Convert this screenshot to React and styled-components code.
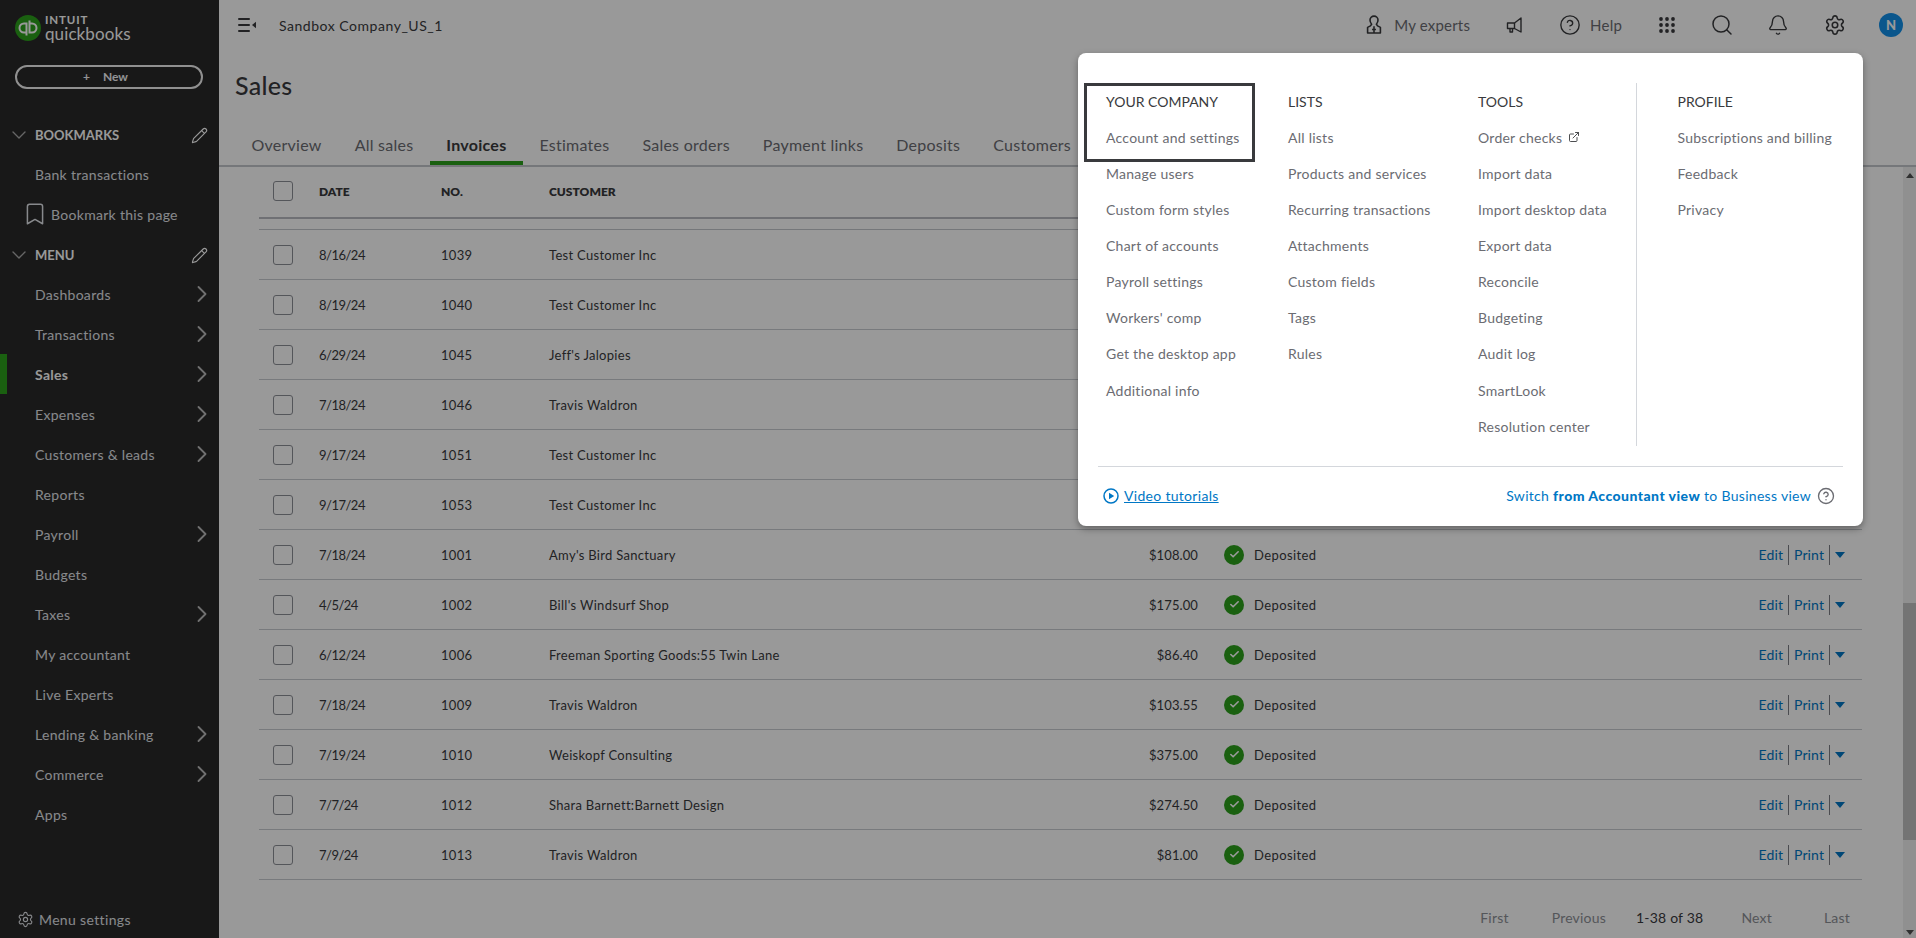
import React from 'react';
import styled, { createGlobalStyle } from 'styled-components';
import { ChevronDown, ChevronRight, Pencil, Bookmark, Settings, Search, Bell, CircleHelp, ExternalLink, Check } from 'lucide-react';

const FONT = `Lato, "Open Sans", "Liberation Sans", sans-serif`;

const Global = createGlobalStyle`
  html, body { margin: 0; padding: 0; height: 100%; overflow: hidden; background: #fff; }
  * { box-sizing: border-box; }
  body { font-family: ${FONT}; font-size: 14px; color: #393a3d; }
`;

const Page = styled.div`
  position: relative;
  display: flex;
  width: 1916px;
  height: 938px;
  overflow: hidden;
  background: #fff;
`;

const Sidebar = styled.aside`
  width: 219px;
  flex: none;
  display: flex;
  flex-direction: column;
  background: #282828;
  color: #e4e6ea;
`;
const LogoRow = styled.div`
  height: 65px;
  flex: none;
  display: flex;
  align-items: center;
  gap: 4px;
  padding: 0 0 9px 15px;
`;
const LogoText = styled.div`
  display: flex;
  flex-direction: column;
  color: #fff;
`;
const LogoIntuit = styled.span`
  font-size: 11.5px;
  font-weight: 700;
  letter-spacing: 0.9px;
  line-height: 11px;
`;
const LogoBooks = styled.span`
  font-size: 17px;
  font-weight: 400;
  letter-spacing: 0.1px;
  line-height: 17px;
`;
const NewButton = styled.div`
  margin-left: 15px;
  width: 188px;
  height: 24px;
  flex: none;
  border: 2px solid #f1f1f1;
  border-radius: 12px;
  display: flex;
  align-items: center;
  justify-content: center;
  gap: 13px;
  padding: 0 7px 1px 0;
  font-size: 12px;
  font-weight: 700;
  color: #f4f5f8;
  margin-bottom: 25px;
`;
const SideSection = styled.div`
  height: 40px;
  flex: none;
  display: flex;
  align-items: center;
  padding: 2px 11px 0 7px;
  font-size: 13px;
  font-weight: 700;
  color: #fff;
`;
const SectionLabel = styled.span`
  margin-left: 4px;
  flex: 1;
`;
const SideItem = styled.div`
  position: relative;
  height: 40px;
  flex: none;
  display: flex;
  align-items: center;
  padding: 0 3px 0 ${p => (p.$icon ? 22 : 35)}px;
  font-size: 14px;
  letter-spacing: 0.3px;
  font-weight: ${p => (p.$active ? 700 : 400)};
  color: ${p => (p.$active ? '#fff' : '#e2e4e9')};
  gap: 3px;
  ${p => p.$active && `border-left: 7px solid #2ca01c; padding-left: 28px;`}
`;
const ItemLabel = styled.span`
  flex: 1;
`;
const SideFooter = styled.div`
  margin-top: auto;
  height: 38px;
  flex: none;
  padding: 0 0 0 17px;
  display: flex;
  align-items: center;
  gap: 5px;
  font-size: 14px;
  letter-spacing: 0.35px;
  color: #e2e4e9;
`;

const Main = styled.main`
  flex: 1;
  min-width: 0;
  display: flex;
  flex-direction: column;
`;
const TopBar = styled.header`
  height: 50px;
  flex: none;
  display: flex;
  align-items: center;
  padding-left: 19px;
  font-size: 14px;
  color: #393a3d;
`;
const Company = styled.span`
  margin-left: 22px;
  letter-spacing: 0.53px;
  flex: 1;
`;
const TopTool = styled.span`
  display: flex;
  align-items: center;
  flex: none;
  gap: ${p => p.$gap || 0}px;
  margin-right: ${p => p.$mr || 0}px;
  color: #6b6c72;
  font-size: 15px;
  letter-spacing: 0.2px;
`;
const Avatar = styled.span`
  width: 24px;
  height: 24px;
  border-radius: 50%;
  background: #1290ea;
  color: #fff;
  font-size: 13px;
  font-weight: 900;
  display: flex;
  align-items: center;
  justify-content: center;
  margin-right: 13px;
`;
const Title = styled.h1`
  height: 70px;
  flex: none;
  margin: 0;
  padding-left: 16px;
  display: flex;
  align-items: center;
  font-size: 25px;
  font-weight: 500;
  letter-spacing: 0.3px;
  color: #393a3d;
`;
const Tabs = styled.nav`
  height: 47px;
  flex: none;
  display: flex;
  padding-left: 16px;
  border-bottom: 2px solid #c4c6cc;
`;
const Tab = styled.div`
  height: 45px;
  padding: 8px 16.5px 0;
  display: flex;
  align-items: center;
  font-size: 16px;
  letter-spacing: 0.25px;
  font-weight: ${p => (p.$active ? 700 : 400)};
  color: ${p => (p.$active ? '#393a3d' : '#6b6c72')};
  border-bottom: 4px solid ${p => (p.$active ? '#2ca01c' : 'transparent')};
`;
const Content = styled.div`
  flex: 1;
  min-height: 0;
  display: flex;
`;
const TableArea = styled.div`
  flex: 1;
  min-width: 0;
  padding: 0 41px 0 40px;
  display: flex;
  flex-direction: column;
`;
const Grid = styled.div`
  display: grid;
  grid-template-columns: 60px 122px 108px 400px 249px 1fr auto;
  align-items: center;
`;
const HeadRow = styled(Grid)`
  height: 52px;
  flex: none;
  padding-bottom: 2px;
  border-bottom: 2px solid #b9bbc2;
  font-size: 12px;
  font-weight: 800;
  color: #393a3d;
`;
const Spacer = styled.div`
  height: 11px;
  flex: none;
  border-bottom: 1px solid #c4c6cc;
`;
const Row = styled(Grid)`
  height: 50px;
  flex: none;
  border-bottom: 1.5px solid #c9cbd0;
  font-size: 13px;
  letter-spacing: 0.3px;
  color: #393a3d;
`;
const DateCell = styled.span`
  letter-spacing: -0.5px;
`;
const Box = styled.span`
  display: block;
  width: 20px;
  height: 20px;
  margin-left: 14px;
  border: 1.5px solid #8d9096;
  border-radius: 3px;
`;
const Amount = styled.span`
  text-align: right;
  letter-spacing: 0.1px;
`;
const Status = styled.span`
  display: flex;
  align-items: center;
  gap: 10px;
  padding-left: 26px;
  letter-spacing: 0.4px;
`;
const StatusDot = styled.span`
  width: 20px;
  height: 20px;
  border-radius: 50%;
  background: #2ca01c;
  display: flex;
  align-items: center;
  justify-content: center;
  color: #fff;
`;
const Actions = styled.span`
  display: flex;
  align-items: center;
  padding-right: 17px;
  color: #0077c5;
  font-size: 14px;
  letter-spacing: 0.1px;
`;
const Sep = styled.span`
  width: 1px;
  height: 20px;
  margin: 0 5px;
  background: #7d7f85;
`;
const Caret = styled.span`
  width: 0;
  height: 0;
  border-left: 5px solid transparent;
  border-right: 5px solid transparent;
  border-top: 6px solid #0077c5;
`;
const Pager = styled.div`
  flex: 1;
  display: flex;
  align-items: center;
  justify-content: flex-end;
  padding: 16px 12px 0 0;
  font-size: 14px;
  letter-spacing: 0.2px;
`;
const PagerItem = styled.span`
  margin-left: ${p => p.$ml}px;
  color: ${p => (p.$on ? '#393a3d' : '#8d9096')};
`;
const Scrollbar = styled.div`
  width: 13px;
  flex: none;
  background: #f1f1f1;
  display: flex;
  flex-direction: column;
  align-items: center;
`;
const ScrollUp = styled.span`
  margin-top: 6px;
  border-left: 4px solid transparent;
  border-right: 4px solid transparent;
  border-bottom: 5px solid #505050;
`;
const Thumb = styled.span`
  width: 100%;
  height: 237px;
  margin-top: 425px;
  background: #c1c1c1;
`;
const ScrollDown = styled.span`
  margin-top: auto;
  margin-bottom: 3px;
  border-left: 4px solid transparent;
  border-right: 4px solid transparent;
  border-top: 5px solid #505050;
`;

const Overlay = styled.div`
  position: absolute;
  inset: 0;
  background: rgba(0, 0, 0, 0.4);
`;
const Popup = styled.div`
  position: absolute;
  left: 1078px;
  top: 53px;
  width: 785px;
  height: 473px;
  background: #fff;
  border-radius: 8px;
  box-shadow: 0 3px 7px rgba(0, 0, 0, 0.35);
  display: flex;
  flex-direction: column;
`;
const FocusBox = styled.div`
  position: absolute;
  left: 6px;
  top: 30px;
  width: 171px;
  height: 79px;
  border: 3px solid #393a3d;
`;
const Columns = styled.div`
  display: grid;
  grid-template-columns: 182px 190px 158.5px 1fr;
  margin: 30px 0 0 28px;
  height: 363px;
  flex: none;
`;
const Column = styled.ul`
  list-style: none;
  margin: 0;
  padding: 0 0 0 ${p => p.$pl || 0}px;
  ${p => p.$rule && `border-right: 1px solid #d4d7dc;`}
  & > li:nth-child(9) { margin-top: 1px; }
`;
const ColHead = styled.li`
  height: 36px;
  padding-top: 1px;
  display: flex;
  align-items: center;
  font-size: 14px;
  color: #393a3d;
`;
const ColItem = styled.li`
  height: 36px;
  display: flex;
  align-items: center;
  gap: 6px;
  font-size: 14px;
  letter-spacing: 0.25px;
  color: #6b6c72;
`;
const Rule = styled.div`
  height: 1px;
  margin: 20px 20px 0;
  background: #d4d7dc;
  flex: none;
`;
const Footer = styled.div`
  flex: 1;
  display: flex;
  align-items: center;
  justify-content: space-between;
  padding: 0 28px 2px 25px;
  font-size: 14px;
  letter-spacing: 0.3px;
  color: #0077c5;
`;
const FootLink = styled.span`
  display: flex;
  align-items: center;
  gap: 5px;
`;
const Underlined = styled.span`
  text-decoration: underline;
`;
const FootNote = styled.span`
  display: flex;
  align-items: center;
  gap: 6px;
`;
const Strong = styled.b`
  font-weight: 900;
  letter-spacing: 0.45px;
`;

const QbLogo = () => (
  <svg width="26" height="26" viewBox="0 0 26 26">
    <circle cx="13" cy="13" r="13" fill="#2ca01c" />
    <g fill="none" stroke="#fff" strokeWidth="2">
      <path d="M11.5 17.5H9a4.5 4.5 0 0 1 0-9h2.5v12" />
      <path d="M14.5 8.5H17a4.5 4.5 0 0 1 0 9h-2.5v-12" />
    </g>
  </svg>
);
const Collapse = () => (
  <svg width="19" height="14" viewBox="0 0 19 14" fill="#393a3d">
    <rect x="0" y="0" width="12" height="2" rx="1" />
    <rect x="0" y="6" width="12" height="2" rx="1" />
    <rect x="0" y="12" width="12" height="2" rx="1" />
    <path d="M18 3.8v6.4L14 7z" />
  </svg>
);
const Expert = () => (
  <svg width="16" height="22" viewBox="0 0 18 24" fill="none" stroke="#393a3d" strokeWidth="1.8" strokeLinejoin="round">
    <path d="M9 2a4.5 4.5 0 0 1 4.5 4.5c0 2-.5 3.2-1.8 4.6L13 13l3.2 1.7V21H1.800v-6.300L5 13l1.300-1.900C5 9.700 4.500 8.500 4.500 6.500A4.500 4.500 0 0 1 9 2z" />
    <path d="M9 13.500v7.500M6.800 17h4.400" />
  </svg>
);
const Megaphone = () => (
  <svg width="18" height="18" viewBox="0 0 18 18" fill="none" stroke="#393a3d" strokeWidth="1.400" strokeLinejoin="round">
    <path d="M16 2v14l-6.500-3.500H2.500v-5.500H9.500z" />
    <path d="M9.500 7v5.500M5 12.500V16h2.500v-3.500" />
  </svg>
);
const Dots = () => (
  <svg width="16" height="16" viewBox="0 0 16 16" fill="#393a3d">
    {[2, 8, 14].flatMap(y => [2, 8, 14].map(x => <circle key={`${x}-${y}`} cx={x} cy={y} r="1.900" />))}
  </svg>
);
const PlayCircle = () => (
  <svg width="16" height="16" viewBox="0 0 16 16">
    <circle cx="8" cy="8" r="7" fill="none" stroke="#0077c5" strokeWidth="1.500" />
    <path d="M6 4.800v6.400L11.200 8z" fill="#0077c5" />
  </svg>
);

const NAV = [
  ['Dashboards', 1], ['Transactions', 1], ['Sales', 1, 1], ['Expenses', 1], ['Customers & leads', 1],
  ['Reports'], ['Payroll', 1], ['Budgets'], ['Taxes', 1], ['My accountant'], ['Live Experts'],
  ['Lending & banking', 1], ['Commerce', 1], ['Apps'],
];
const TABS = [
  ['Overview'], ['All sales'], ['Invoices', true], ['Estimates'], ['Sales orders'], ['Payment links'], ['Deposits'], ['Customers'],
];
const ROWS = [
  ['8/16/24', '1039', 'Test Customer Inc'],
  ['8/19/24', '1040', 'Test Customer Inc'],
  ['6/29/24', '1045', "Jeff's Jalopies"],
  ['7/18/24', '1046', 'Travis Waldron'],
  ['9/17/24', '1051', 'Test Customer Inc'],
  ['9/17/24', '1053', 'Test Customer Inc'],
  ['7/18/24', '1001', "Amy's Bird Sanctuary", '$108.00'],
  ['4/5/24', '1002', "Bill's Windsurf Shop", '$175.00'],
  ['6/12/24', '1006', 'Freeman Sporting Goods:55 Twin Lane', '$86.40'],
  ['7/18/24', '1009', 'Travis Waldron', '$103.55'],
  ['7/19/24', '1010', 'Weiskopf Consulting', '$375.00'],
  ['7/7/24', '1012', 'Shara Barnett:Barnett Design', '$274.50'],
  ['7/9/24', '1013', 'Travis Waldron', '$81.00'],
];
const COLS = [
  ['YOUR COMPANY', ['Account and settings', 'Manage users', 'Custom form styles', 'Chart of accounts', 'Payroll settings', "Workers' comp", 'Get the desktop app', 'Additional info']],
  ['LISTS', ['All lists', 'Products and services', 'Recurring transactions', 'Attachments', 'Custom fields', 'Tags', 'Rules']],
  ['TOOLS', ['Order checks', 'Import data', 'Import desktop data', 'Export data', 'Reconcile', 'Budgeting', 'Audit log', 'SmartLook', 'Resolution center']],
  ['PROFILE', ['Subscriptions and billing', 'Feedback', 'Privacy']],
];
const PAGER = [['First', 0], ['Previous', 43], ['1-38 of 38', 30, true], ['Next', 38], ['Last', 52]];

export default function App() {
  return (
    <Page>
      <Global />
      <Sidebar>
        <LogoRow>
          <QbLogo />
          <LogoText>
            <LogoIntuit>INTUIT</LogoIntuit>
            <LogoBooks>quickbooks</LogoBooks>
          </LogoText>
        </LogoRow>
        <NewButton><span>+</span><span>New</span></NewButton>
        <SideSection>
          <ChevronDown size={24} strokeWidth={1.4} color="#aaa" />
          <SectionLabel>BOOKMARKS</SectionLabel>
          <Pencil size={17} strokeWidth={1.6} />
        </SideSection>
        <SideItem>Bank transactions</SideItem>
        <SideItem $icon><Bookmark size={26} strokeWidth={1.4} color="#e2e4e9" /><ItemLabel>Bookmark this page</ItemLabel></SideItem>
        <SideSection>
          <ChevronDown size={24} strokeWidth={1.4} color="#aaa" />
          <SectionLabel>MENU</SectionLabel>
          <Pencil size={17} strokeWidth={1.6} />
        </SideSection>
        {NAV.map(([label, more, active]) => (
          <SideItem key={label} $active={active}>
            <ItemLabel>{label}</ItemLabel>
            {more && <ChevronRight size={28} strokeWidth={1.6} color="#bbb" />}
          </SideItem>
        ))}
        <SideFooter><Settings size={17} strokeWidth={1.6} />Menu settings</SideFooter>
      </Sidebar>
      <Main>
        <TopBar>
          <Collapse />
          <Company>Sandbox Company_US_1</Company>
          <TopTool $gap={12} $mr={35}><Expert />My experts</TopTool>
          <TopTool $mr={36}><Megaphone /></TopTool>
          <TopTool $gap={9} $mr={37}><CircleHelp size={22} strokeWidth={1.5} color="#393a3d" />Help</TopTool>
          <TopTool $mr={35}><Dots /></TopTool>
          <TopTool $mr={33}><Search size={24} strokeWidth={1.5} color="#393a3d" /></TopTool>
          <TopTool $mr={35}><Bell size={22} strokeWidth={1.5} color="#393a3d" /></TopTool>
          <TopTool $mr={33}><Settings size={22} strokeWidth={1.7} color="#393a3d" /></TopTool>
          <Avatar>N</Avatar>
        </TopBar>
        <Title>Sales</Title>
        <Tabs>
          {TABS.map(([t, active]) => <Tab key={t} $active={active}>{t}</Tab>)}
        </Tabs>
        <Content>
          <TableArea>
            <HeadRow>
              <Box />
              <span>DATE</span>
              <span>NO.</span>
              <span>CUSTOMER</span>
            </HeadRow>
            <Spacer />
            {ROWS.map(([date, no, customer, amount]) => (
              <Row key={no}>
                <Box />
                <DateCell>{date}</DateCell>
                <span>{no}</span>
                <span>{customer}</span>
                <Amount>{amount}</Amount>
                {amount ? (
                  <>
                    <Status><StatusDot><Check size={11} strokeWidth={3.5} /></StatusDot>Deposited</Status>
                    <Actions>Edit<Sep />Print<Sep /><Caret /></Actions>
                  </>
                ) : null}
              </Row>
            ))}
            <Pager>
              {PAGER.map(([t, ml, on]) => <PagerItem key={t} $ml={ml} $on={on}>{t}</PagerItem>)}
            </Pager>
          </TableArea>
          <Scrollbar><ScrollUp /><Thumb /><ScrollDown /></Scrollbar>
        </Content>
      </Main>
      <Overlay />
      <Popup>
        <FocusBox />
        <Columns>
          {COLS.map(([head, items], i) => (
            <Column key={head} $rule={i === 2} $pl={i === 3 ? 41 : 0}>
              <ColHead>{head}</ColHead>
              {items.map(item => (
                <ColItem key={item}>
                  {item}
                  {item === 'Order checks' && <ExternalLink size={12} strokeWidth={1.8} color="#393a3d" />}
                </ColItem>
              ))}
            </Column>
          ))}
        </Columns>
        <Rule />
        <Footer>
          <FootLink><PlayCircle /><Underlined>Video tutorials</Underlined></FootLink>
          <FootNote>
            <span>Switch <Strong>from Accountant view</Strong> to Business view</span>
            <CircleHelp size={18} strokeWidth={1.8} color="#6b6c72" />
          </FootNote>
        </Footer>
      </Popup>
    </Page>
  );
}
